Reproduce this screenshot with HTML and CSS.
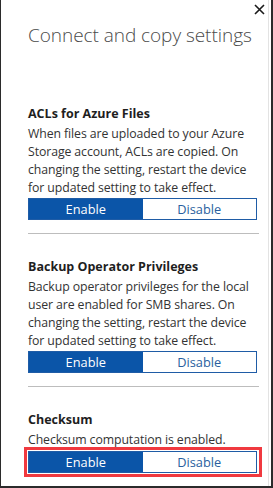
FILE: index.html
```html
<!DOCTYPE html>
<html>
<head>
<meta charset="utf-8">
<link rel="stylesheet" href="styles.css">
</head>
<body>
<div class="frame">
  <div class="pane">
    <button class="close" aria-label="Close">
      <svg width="11" height="11" viewBox="0 0 11 11"><path d="M1 1L10 10M10 1L1 10" stroke="#1a1a1a" stroke-width="1.6" fill="none"/></svg>
    </button>
    <h1 class="title">Connect and copy settings</h1>

    <section class="setting first">
      <h2 class="setting-title">ACLs for Azure Files</h2>
      <p class="setting-desc">When files are uploaded to your Azure Storage account, ACLs are copied. On changing the setting, restart the device for updated setting to take effect.</p>
      <div class="toggle">
        <span class="opt on">Enable</span><span class="opt off">Disable</span>
      </div>
    </section>
    <hr class="divider">

    <section class="setting">
      <h2 class="setting-title">Backup Operator Privileges</h2>
      <p class="setting-desc">Backup operator privileges for the local user are enabled for SMB shares. On changing the setting, restart the device for updated setting to take effect.</p>
      <div class="toggle">
        <span class="opt on">Enable</span><span class="opt off">Disable</span>
      </div>
    </section>
    <hr class="divider">

    <section class="setting">
      <h2 class="setting-title">Checksum</h2>
      <p class="setting-desc">Checksum computation is enabled.</p>
      <div class="highlight">
        <div class="toggle">
          <span class="opt on">Enable</span><span class="opt off">Disable</span>
        </div>
      </div>
    </section>
  </div>
</div>
</body>
</html>
```
FILE: styles.css
```css
html, body {
  margin: 0;
  padding: 0;
  background: #fff;
}
.frame {
  width: 273px;
  height: 488px;
  box-sizing: border-box;
  border-left: 1px solid #2b2b2b;
  border-right: 2px solid #2b2b2b;
  border-bottom: 2px solid #2b2b2b;
  overflow: hidden;
}
.pane {
  position: relative;
  height: 100%;
  box-sizing: border-box;
  border-right: 1px solid #e3e3e3;
  margin-right: 2px;
  padding: 0 0 0 27px;
  font-family: "Open Sans", "Noto Sans", sans-serif;
  color: #2f2f2f;
}
.close {
  position: absolute;
  top: 3px;
  right: 3px;
  width: 13px;
  height: 13px;
  padding: 0 0 0 1px;
  border: 0;
  background: none;
  display: flex;
  align-items: center;
  justify-content: center;
}
.title {
  margin: 0;
  padding-top: 23px;
  font-weight: 300;
  font-size: 19px;
  line-height: 24px;
  color: #4a4a4a;
  letter-spacing: -0.05px;
  white-space: nowrap;
}
.setting {
  width: 230px;
}
.setting.first {
  margin-top: 58px;
}
.setting-title {
  margin: 0;
  font-size: 12.5px;
  font-weight: 700;
  line-height: 17px;
  color: #1e1e1e;
}
.setting-desc {
  margin: 3px 0 0;
  font-size: 12.3px;
  line-height: 18px;
  color: #333;
  letter-spacing: -0.1px;
}
.toggle {
  display: flex;
  width: 229px;
  height: 22px;
  margin-top: 1px;
  box-sizing: border-box;
  border: 1px solid #1f5ca6;
}
.opt {
  flex: 1;
  display: flex;
  align-items: center;
  justify-content: center;
  font-size: 12.8px;
}
.opt.on {
  background: #0b55a8;
  color: #fff;
}
.opt.off {
  background: #fff;
  color: #2a5f9e;
}
.divider {
  width: 231px;
  margin: 13px 0 24px;
  border: 0;
  border-top: 1px solid #bdbdbd;
  height: 0;
}
.highlight {
  margin: -2px 0 0 -4px;
  width: 238px;
  box-sizing: border-box;
  border: 3px solid #f0393f;
  padding: 1px 0 1px 1px;
}
.highlight .toggle {
  margin-top: 0;
  width: 229px;
}
```
